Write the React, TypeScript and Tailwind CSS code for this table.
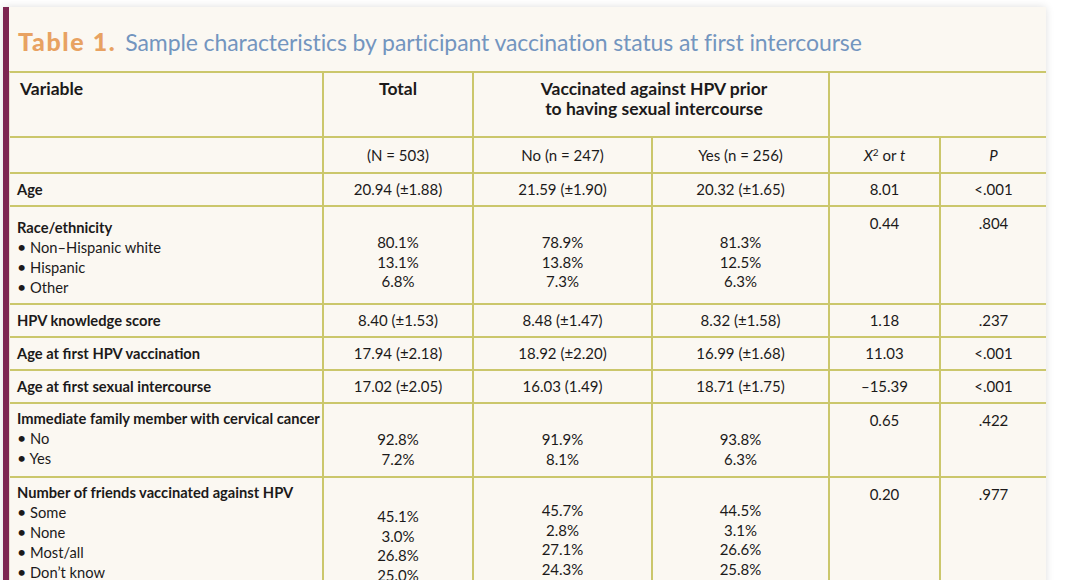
import React from "react";

const line = "border-[#cbc76c]";

function SimpleRow({ label, c2, c3, c4, c5, c6 }: { label: string; c2: string; c3: string; c4: string; c5: string; c6: string }) {
  return (
    <div className={`flex h-[33px] border-b-2 ${line} items-stretch`}>
      <div className={`w-[314px] shrink-0 border-r-2 ${line} pl-[7px] flex items-center font-bold text-[14.7px]`}>{label}</div>
      <div className={`w-[150px] shrink-0 border-r-2 ${line} flex items-center justify-center`}>{c2}</div>
      <div className={`w-[179px] shrink-0 border-r-2 ${line} flex items-center justify-center`}>{c3}</div>
      <div className={`w-[177px] shrink-0 border-r-2 ${line} flex items-center justify-center`}>{c4}</div>
      <div className={`w-[111px] shrink-0 border-r-2 ${line} flex items-center justify-center`}>{c5}</div>
      <div className="flex-1 flex items-center justify-center">{c6}</div>
    </div>
  );
}

function Values({ items, pt }: { items: string[]; pt: string }) {
  return (
    <div className={`flex flex-col items-center leading-[19.5px] ${pt}`}>
      {items.map((v, i) => (
        <span key={i}>{v}</span>
      ))}
    </div>
  );
}

function MultiRow({
  h,
  title,
  bullets,
  labelPt,
  c2,
  c3,
  c4,
  c5,
  c6,
  pt2,
  pt34,
  last,
}: {
  h: string;
  title: string;
  bullets: string[];
  labelPt: string;
  c2: string[];
  c3: string[];
  c4: string[];
  c5: string;
  c6: string;
  pt2: string;
  pt34: string;
  last?: boolean;
}) {
  return (
    <div className={`flex ${h} ${last ? "" : "border-b-2"} ${line} items-stretch`}>
      <div className={`w-[314px] shrink-0 border-r-2 ${line} pl-[7px] ${labelPt} leading-[20px] whitespace-nowrap text-[14.7px]`}>
        <div className="font-bold">{title}</div>
        {bullets.map((b, i) => (
          <div key={i}>
            <span className="text-[16px]">•</span> {b}
          </div>
        ))}
      </div>
      <div className={`w-[150px] shrink-0 border-r-2 ${line}`}>
        <Values items={c2} pt={pt2} />
      </div>
      <div className={`w-[179px] shrink-0 border-r-2 ${line}`}>
        <Values items={c3} pt={pt34} />
      </div>
      <div className={`w-[177px] shrink-0 border-r-2 ${line}`}>
        <Values items={c4} pt={pt34} />
      </div>
      <div className={`w-[111px] shrink-0 border-r-2 ${line} text-center pt-[6px] leading-[20px]`}>{c5}</div>
      <div className="flex-1 text-center pt-[6px] leading-[20px]">{c6}</div>
    </div>
  );
}

export default function App() {
  return (
    <div className="w-[1068px] h-[580px] overflow-hidden bg-white pt-[7px] pl-[3px]" style={{ fontFamily: "Lato, 'Open Sans', sans-serif" }}>
      <div className="w-[1043px] h-[600px] bg-[#fbf8f2] border-l-[6px] border-[#7d2652] shadow-[0_0_8px_rgba(0,0,0,0.13)] text-[#1c1a1a] text-[15px]">
        <div className="h-[64px] pl-[9px] pt-[19px] text-[23px] leading-[30px] whitespace-nowrap">
          <span className="font-black text-[#e8a262] text-[25px] tracking-[1.6px] mr-[3px]">Table 1.</span>{" "}
          <span className="text-[#7395bf] tracking-[-0.1px]">Sample characteristics by participant vaccination status at first intercourse</span>
        </div>
        <div className={`border-t-2 ${line} border-l border-l-[#e6e0d0]`}>
          {/* header row 1 */}
          <div className={`flex h-[65px] border-b-2 ${line} items-stretch font-bold text-[17.5px] leading-[20px]`}>
            <div className={`w-[314px] shrink-0 border-r-2 ${line} pl-[10px] pt-[6px]`}>Variable</div>
            <div className={`w-[150px] shrink-0 border-r-2 ${line} text-center pt-[6px]`}>Total</div>
            <div className={`w-[356px] shrink-0 border-r-2 ${line} text-center pt-[6px] pl-[6px]`}>
              Vaccinated against HPV prior
              <br />
              to having sexual intercourse
            </div>
            <div className="flex-1" />
          </div>
          {/* header row 2 */}
          <div className={`flex h-[36px] border-b-2 ${line} items-stretch`}>
            <div className={`w-[314px] shrink-0 border-r-2 ${line}`} />
            <div className={`w-[150px] shrink-0 border-r-2 ${line} flex items-center justify-center`}>(N = 503)</div>
            <div className={`w-[179px] shrink-0 border-r-2 ${line} flex items-center justify-center`}>No (n = 247)</div>
            <div className={`w-[177px] shrink-0 border-r-2 ${line} flex items-center justify-center`}>Yes (n = 256)</div>
            <div className={`w-[111px] shrink-0 border-r-2 ${line} flex items-center justify-center`}>
              <span>
                <i>X</i>
                <sup className="text-[10px]">2</sup> or <i>t</i>
              </span>
            </div>
            <div className="flex-1 flex items-center justify-center">
              <i>P</i>
            </div>
          </div>
          <SimpleRow label="Age" c2="20.94 (±1.88)" c3="21.59 (±1.90)" c4="20.32 (±1.65)" c5="8.01" c6="<.001" />
          <MultiRow
            h="h-[98px]"
            title="Race/ethnicity"
            bullets={["Non–Hispanic white", "Hispanic", "Other"]}
            labelPt="pt-[10px]"
            c2={["80.1%", "13.1%", "6.8%"]}
            c3={["78.9%", "13.8%", "7.3%"]}
            c4={["81.3%", "12.5%", "6.3%"]}
            c5="0.44"
            c6=".804"
            pt2="pt-[26px]"
            pt34="pt-[26px]"
          />
          <SimpleRow label="HPV knowledge score" c2="8.40 (±1.53)" c3="8.48 (±1.47)" c4="8.32 (±1.58)" c5="1.18" c6=".237" />
          <SimpleRow label="Age at first HPV vaccination" c2="17.94 (±2.18)" c3="18.92 (±2.20)" c4="16.99 (±1.68)" c5="11.03" c6="<.001" />
          <SimpleRow label="Age at first sexual intercourse" c2="17.02 (±2.05)" c3="16.03 (1.49)" c4="18.71 (±1.75)" c5="–15.39" c6="<.001" />
          <MultiRow
            h="h-[74px]"
            title="Immediate family member with cervical cancer"
            bullets={["No", "Yes"]}
            labelPt="pt-[4px]"
            c2={["92.8%", "7.2%"]}
            c3={["91.9%", "8.1%"]}
            c4={["93.8%", "6.3%"]}
            c5="0.65"
            c6=".422"
            pt2="pt-[26px]"
            pt34="pt-[26px]"
          />
          <MultiRow
            h="h-[130px]"
            title="Number of friends vaccinated against HPV"
            bullets={["Some", "None", "Most/all", "Don’t know"]}
            labelPt="pt-[4px]"
            c2={["45.1%", "3.0%", "26.8%", "25.0%"]}
            c3={["45.7%", "2.8%", "27.1%", "24.3%"]}
            c4={["44.5%", "3.1%", "26.6%", "25.8%"]}
            c5="0.20"
            c6=".977"
            pt2="pt-[29px]"
            pt34="pt-[23px]"
            last
          />
        </div>
      </div>
    </div>
  );
}
